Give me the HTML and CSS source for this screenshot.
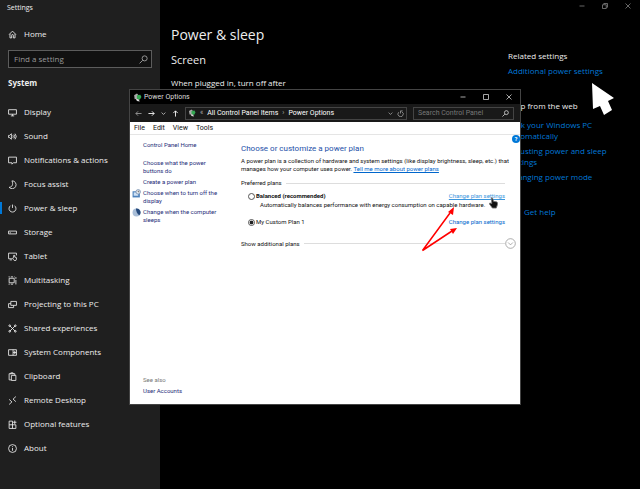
FILE: index.html
```html
<!DOCTYPE html>
<html lang="en">
<head>
    <meta charset="UTF-8">
    <title>Settings</title>
    <link rel="stylesheet" href="styles.css">
</head>
<body>
    <div class="settings">
        <nav class="sidebar">
            <div class="app-name">Settings</div>
            <a class="nav-item home" href="#"><svg viewBox="0 0 16 16"><path d="M2 8l6-6 6 6M3.500 7v7h3V9.500a1.500 1.500 0 0 1 3 0V14h3V7"/></svg>Home</a>
            <div class="search">
                <input type="text" placeholder="Find a setting" aria-label="Find a setting">
                <svg viewBox="0 0 16 16"><circle cx="10" cy="6" r="4.500"/><path d="M6.500 9.500L1 15"/></svg>
            </div>
            <h2>System</h2>
            <a class="nav-item" href="#"><svg viewBox="0 0 16 16"><path d="M1 3h14v8H1zM5 14h6M8 11v3"/></svg>Display</a>
            <a class="nav-item" href="#"><svg viewBox="0 0 16 16"><path d="M1 6v4h2l3 3V3L3 6zM8.500 6q1.500 2 0 4M10.500 4.500q3 3.500 0 7M12.500 3q4.500 5 0 10"/></svg>Sound</a>
            <a class="nav-item" href="#"><svg viewBox="0 0 16 16"><path d="M1 2h14v10H9.500L7 14.500V12H1z"/></svg>Notifications &amp; actions</a>
            <a class="nav-item" href="#"><svg viewBox="0 0 16 16"><path d="M7 1.500a7 7 0 1 1-5 11.500c5 0 8-5 5-11.500z"/></svg>Focus assist</a>
            <a class="nav-item active" href="#"><svg viewBox="0 0 16 16"><path d="M8 1v6M4.500 3a6.200 6.200 0 1 0 7 0"/></svg>Power &amp; sleep</a>
            <a class="nav-item" href="#"><svg viewBox="0 0 16 16"><path d="M1 5.500h14v5H1zM3 8.500h2"/></svg>Storage</a>
            <a class="nav-item" href="#"><svg viewBox="0 0 16 16"><path d="M7 12H1V2h14v4M3 14h4M10 14l-2-3 2-1V6h2v3l3 1v3l-1 2h-3z"/></svg>Tablet</a>
            <a class="nav-item" href="#"><svg viewBox="0 0 16 16"><path d="M2 4h9v8H2zM1 1.500h2M5 1.500h4M1 14.500h2M5 14.500h4M11 1.500h1M14 2v3M14 7v8"/></svg>Multitasking</a>
            <a class="nav-item" href="#"><svg viewBox="0 0 16 16"><path d="M5 2.500h10v7H5zM5 6.500H1v7h9v-4"/></svg>Projecting to this PC</a>
            <a class="nav-item" href="#"><svg viewBox="0 0 16 16"><path d="M3 3l10 10M13 3L3 13"/><circle cx="3" cy="3" r="1.500"/><circle cx="13" cy="3" r="1.500"/><circle cx="3" cy="13" r="1.500"/><circle cx="13" cy="13" r="1.500"/></svg>Shared experiences</a>
            <a class="nav-item" href="#"><svg viewBox="0 0 16 16"><path d="M1 3h14v10H1zM9 3v10M9 8h6M12 5v6"/></svg>System Components</a>
            <a class="nav-item" href="#"><svg viewBox="0 0 16 16"><path d="M6 14H2V3h10v3M5 4V1.500h4V4M6 6h8v9H6z"/></svg>Clipboard</a>
            <a class="nav-item" href="#"><svg viewBox="0 0 16 16"><path d="M2 6l5 4.500L2 15M14 1L9 5.500l5 4.500"/></svg>Remote Desktop</a>
            <a class="nav-item" href="#"><svg viewBox="0 0 16 16"><path d="M8 2H2v13h12V8.500H2M8 2v13M12 1v6M9 4h6"/></svg>Optional features</a>
            <a class="nav-item" href="#"><svg viewBox="0 0 16 16"><circle cx="8" cy="8" r="7"/><path d="M8 7v5M8 4v1.500"/></svg>About</a>
        </nav>
        <main class="page">
            <div class="caption">
                <button aria-label="Minimize"><svg viewBox="0 0 16 16"><path d="M3 8h10"/></svg></button>
                <button aria-label="Restore"><svg viewBox="0 0 16 16"><path d="M3 5.500h7.500V13H3zM5.500 5V3H13v7.500h-2"/></svg></button>
                <button aria-label="Close"><svg viewBox="0 0 16 16"><path d="M3 3l10 10M13 3L3 13"/></svg></button>
            </div>
            <div class="columns">
                <section class="content">
                    <h1>Power &amp; sleep</h1>
                    <h3>Screen</h3>
                    <p>When plugged in, turn off after</p>
                </section>
                <aside class="related">
                    <h4>Related settings</h4>
                    <a href="#">Additional power settings</a>
                    <h4 class="web">Help from the web</h4>
                    <a href="#">Lock your Windows PC<br>automatically</a>
                    <a href="#">Adjusting power and sleep<br>settings</a>
                    <a href="#">Changing power mode</a>
                    <a class="get-help" href="#">Get help</a>
                </aside>
            </div>
        </main>
    </div>

    <div class="window">
        <header class="titlebar">
            <svg class="battery" viewBox="0 0 16 16"><path fill="#aaa" d="M2 4l5-3 3 3-2 6-5 1z"/><path fill="#35a853" d="M7 4l6-1 2 4-3 5-5-2z"/><path fill="#ddd" d="M5 10l5 1 2 4-5-1z"/></svg>
            <span>Power Options</span>
            <div class="buttons">
                <button aria-label="Minimize window"><svg viewBox="0 0 16 16"><path d="M3 8h10"/></svg></button>
                <button aria-label="Maximize window"><svg viewBox="0 0 16 16"><path d="M3 3h10v10H3z"/></svg></button>
                <button aria-label="Close window"><svg viewBox="0 0 16 16"><path d="M3 3l10 10M13 3L3 13"/></svg></button>
            </div>
        </header>
        <div class="toolbar">
            <button class="dim" aria-label="Back"><svg viewBox="0 0 16 16"><path d="M15 8H2M7 3L2 8l5 5"/></svg></button>
            <button aria-label="Forward"><svg viewBox="0 0 16 16"><path d="M1 8h13M9 3l5 5-5 5"/></svg></button>
            <button class="recent" aria-label="Recent"><svg viewBox="0 0 16 16"><path d="M2 5l6 6 6-6"/></svg></button>
            <button aria-label="Up"><svg viewBox="0 0 16 16"><path d="M8 15V2M3 7l5-5 5 5"/></svg></button>
            <div class="address">
                <svg class="battery" viewBox="0 0 16 16"><path fill="#aaa" d="M2 4l5-3 3 3-2 6-5 1z"/><path fill="#35a853" d="M7 4l6-1 2 4-3 5-5-2z"/><path fill="#ddd" d="M5 10l5 1 2 4-5-1z"/></svg>
                <span class="sep">«</span>
                <span>All Control Panel Items</span>
                <span class="sep">›</span>
                <span>Power Options</span>
                <svg class="drop" viewBox="0 0 16 16"><path d="M2 5l6 6 6-6"/></svg>
                <svg class="refresh" viewBox="0 0 16 16"><path d="M4 5a6 6 0 1 0 7-1M8 8V2h5"/></svg>
            </div>
            <div class="find">
                <input type="text" placeholder="Search Control Panel" aria-label="Search Control Panel">
                <svg viewBox="0 0 16 16"><circle cx="10" cy="6" r="4.500"/><path d="M6.500 9.500L1 15"/></svg>
            </div>
        </div>
        <div class="menu">
            <button>File</button>
            <button>Edit</button>
            <button>View</button>
            <button>Tools</button>
        </div>
        <div class="body">
            <nav class="tasks">
                <a class="first" href="#">Control Panel Home</a>
                <a href="#">Choose what the power<br>buttons do</a>
                <a href="#">Create a power plan</a>
                <a class="with-icon" href="#"><svg viewBox="0 0 16 16"><path fill="#4f83bd" d="M1 4h13v11H1z"/><path fill="#cfe2f5" d="M3 6h8v6H3z"/><circle cx="11" cy="5" r="4" fill="#e9edf2" stroke="#7b93b3"/><path d="M11 3v2h2" stroke="#555"/></svg><span>Choose when to turn off the<br>display</span></a>
                <a class="with-icon" href="#"><svg viewBox="0 0 16 16"><circle cx="8" cy="8" r="7" fill="#a9bed8"/><path fill="#264a7c" d="M7 1a7 7 0 0 1 6 12C10 11 7 7 7 1z"/></svg><span>Change when the computer<br>sleeps</span></a>
                <div class="see-also">See also</div>
                <a class="accounts" href="#">User Accounts</a>
            </nav>
            <section class="plans">
                <button class="help" aria-label="Help">?</button>
                <h2>Choose or customize a power plan</h2>
                <p>A power plan is a collection of hardware and system settings (like display brightness, sleep, etc.) that<br>manages how your computer uses power. <a href="#">Tell me more about power plans</a></p>
                <div class="group">Preferred plans</div>
                <div class="plan">
                    <label class="bold"><input type="radio" name="plan">Balanced (recommended)</label>
                    <a class="hover" href="#">Change plan settings</a>
                </div>
                <div class="note">Automatically balances performance with energy consumption on capable hardware.</div>
                <div class="plan">
                    <label><input type="radio" name="plan" checked>My Custom Plan 1</label>
                    <a href="#">Change plan settings</a>
                </div>
                <div class="group more">Show additional plans
                    <button aria-label="Show additional plans"><svg viewBox="0 0 16 16"><circle cx="8" cy="8" r="7"/><path d="M4.500 6.500L8 10l3.500-3.500"/></svg></button>
                </div>
            </section>
        </div>
        <svg class="hand" viewBox="0 0 16 20"><path fill="#111" stroke="#777" d="M4 1q2-1 2.500 1L8 7l6 1q2 1 1 5l-2 6H6L1 12q-1-2 1-2l3 1z"/></svg>
        <svg class="arrows" viewBox="0 0 40 50"><path stroke="#f00" stroke-width="1.500" d="M30 7L2.500 44.500L32 25"/><path fill="#f00" stroke="none" d="M34 1l-1 8-5-3zM37 22l-4 6-3-5z"/></svg>
    </div>
    <svg class="pointer" viewBox="0 0 22 34"><path fill="#fff" d="M0 1l22 15-6 3 4 9-8 5-4-9-7 3z"/></svg>
</body>
</html>
```
FILE: styles.css
```css
* {
    box-sizing: border-box;
}
body {
    margin: 0;
    background-color: #000;
    color: #eee;
    font-family: "Open Sans", "Noto Sans", sans-serif;
    font-size: 8px;
    line-height: 12px;
    position: relative;
}
h1, h2, h3, h4, p {
    margin: 0;
    font-weight: normal;
}
a {
    text-decoration: none;
}
button {
    background: none;
    border: none;
    padding: 0;
    color: inherit;
    font: inherit;
    display: flex;
}
svg {
    width: 9px;
    height: 9px;
    fill: none;
    stroke: currentColor;
    stroke-width: 1.5;
    flex-shrink: 0;
}
.battery, .with-icon svg {
    stroke: none;
}

/* settings app */
.settings {
    display: flex;
    min-height: 100vh;
}
.sidebar {
    width: 25%;
    background-color: #1f1f1f;
}
.app-name {
    font-size: 7px;
    padding: 2px 7px 8px;
}
.nav-item {
    display: flex;
    align-items: center;
    gap: 7px;
    height: 24px;
    padding-left: 8px;
    color: #eee;
    white-space: nowrap;
}
.nav-item.active {
    background: linear-gradient(#0078d7, #0078d7) no-repeat left center / 2px 12px;
}
.search {
    display: flex;
    align-items: center;
    height: 18px;
    margin: 4px 8px 7px;
    padding: 0 3px 0 5px;
    border: 1px solid #5c5c5c;
    background-color: #111;
    color: #aaa;
}
.search input, .find input {
    flex: 1;
    min-width: 0;
    padding: 0;
    border: none;
    outline: none;
    background: none;
    color: #fff;
    font: inherit;
}
.search input::placeholder {
    color: #999;
}
.sidebar h2 {
    font-size: 8px;
    font-weight: bold;
    padding: 2px 8px 11px;
}
.page {
    flex: 1;
}
.caption {
    display: flex;
    justify-content: flex-end;
    gap: 15px;
    padding: 2px 8px 0 0;
    color: #888;
}
.caption svg {
    width: 8px;
    height: 8px;
}
.columns {
    display: flex;
    justify-content: space-between;
    padding: 14px 0 0 11px;
}
h1 {
    font-size: 14px;
    line-height: 22px;
}
h3 {
    font-size: 11px;
    line-height: 16px;
    margin: 6px 0 9px;
}
.related {
    width: 132px;
    padding-top: 26px;
}
.related a {
    display: block;
    color: #0078d7;
    line-height: 11px;
    margin-bottom: 4px;
}
.related h4 {
    margin-bottom: 3px;
}
.related .web {
    margin: 24px 0 7px;
}
.related .get-help {
    margin-top: 24px;
    padding-left: 16px;
}

/* power options window */
.window {
    position: absolute;
    left: 129px;
    top: 89px;
    width: 392px;
    height: 316px;
    display: flex;
    flex-direction: column;
    border: 1px solid #444;
    background-color: #fff;
    color: #111;
    font-family: Roboto, sans-serif;
    font-size: 6px;
    line-height: 8px;
}
.titlebar, .toolbar, .menu {
    font-size: 7px;
}
.titlebar {
    display: flex;
    align-items: center;
    gap: 2px;
    height: 14px;
    padding: 0 7px 0 3px;
    background-color: #000;
    color: #ddd;
}
.buttons {
    display: flex;
    gap: 15px;
    margin-left: auto;
}
.buttons svg {
    width: 8px;
    height: 8px;
}
.toolbar {
    display: flex;
    align-items: center;
    gap: 6px;
    height: 18px;
    padding: 0 6px 0 5px;
    background-color: #191919;
    color: #fff;
}
.toolbar svg {
    width: 7px;
    height: 7px;
}
.toolbar button svg {
    stroke-width: 2;
}
.toolbar .dim {
    color: #999;
}
.toolbar .recent svg {
    width: 5px;
}
.address, .find {
    display: flex;
    align-items: center;
    gap: 4px;
    height: 13px;
    padding: 0 2px;
    border: 1px solid #444;
}
.address {
    flex: 1;
}
.address .battery {
    width: 8px;
    height: 8px;
}
.address .sep {
    color: #aaa;
}
.address .drop {
    width: 5px;
    margin-left: auto;
}
.address .refresh {
    color: #bbb;
}
.find {
    width: 101px;
    padding: 0 4px;
}
.find input::placeholder {
    color: #777;
}
.menu {
    display: flex;
    gap: 8px;
    height: 13px;
    align-items: center;
    padding-left: 4px;
    border-bottom: 1px solid #e5e5e5;
}
.body {
    display: flex;
    flex: 1;
}
.tasks {
    display: flex;
    flex-direction: column;
    flex-shrink: 0;
    width: 111px;
    padding: 6px 0 9px 13px;
    white-space: nowrap;
}
.tasks a {
    color: #1e2b78;
    margin-bottom: 3px;
}
.tasks .first {
    margin-bottom: 10px;
}
.tasks .with-icon {
    display: flex;
    gap: 2px;
    margin-left: -11px;
}
.see-also {
    margin-top: auto;
    margin-bottom: 3px;
    color: #777;
}
.tasks .accounts {
    margin-bottom: 0;
}
.plans {
    position: relative;
    flex: 1;
    min-width: 0;
    padding: 8px 15px 0 0;
    white-space: nowrap;
}
.plans h2 {
    color: #1c4fa8;
    font-size: 8px;
    line-height: 12px;
    margin-bottom: 2px;
}
.plans a {
    color: #0066cc;
}
.plans p a, .plans .hover {
    text-decoration: underline;
}
.plans .hover {
    color: #3a96dd;
}
.help {
    position: absolute;
    top: 0;
    right: 0;
    width: 8px;
    height: 8px;
    justify-content: center;
    border-radius: 50%;
    background-color: #0078d7;
    color: #fff;
    font-weight: bold;
}
.group {
    display: flex;
    align-items: center;
    gap: 4px;
    margin-top: 6px;
}
.group::after {
    content: "";
    flex: 1;
    height: 1px;
    background-color: #ddd;
}
.plan {
    display: flex;
    justify-content: space-between;
    margin-top: 5px;
    padding-left: 7px;
}
.plan label {
    display: flex;
    align-items: center;
    gap: 1px;
}
.plan .bold {
    font-weight: bold;
}
.plan input {
    appearance: none;
    width: 7px;
    height: 7px;
    margin: 0;
    border: 1px solid #555;
    border-radius: 50%;
}
.plan input:checked {
    background: radial-gradient(#222 50%, #fff 60%);
}
.note {
    padding-left: 19px;
    margin: 1px 0 9px;
}
.more {
    margin: 12px -11px 0 0;
}
.more button {
    order: 2;
    margin-left: -4px;
    color: #888;
}
.more svg {
    width: 11px;
    height: 11px;
    stroke-width: 1;
}

/* pointers and arrows on top */
.hand {
    position: absolute;
    left: 359px;
    top: 107px;
    width: 9px;
    height: 12px;
}
.arrows {
    position: absolute;
    left: 290px;
    top: 116px;
    width: 40px;
    height: 50px;
}
.pointer {
    position: absolute;
    left: 592px;
    top: 82px;
    width: 22px;
    height: 34px;
    stroke: none;
}
```
